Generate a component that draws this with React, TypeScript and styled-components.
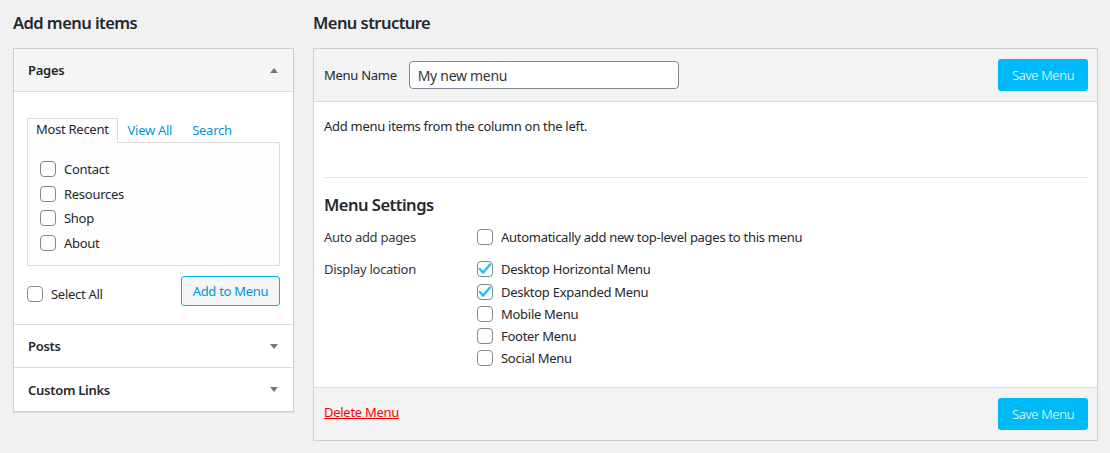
import React from 'react';
import styled, { createGlobalStyle } from 'styled-components';

const GlobalStyle = createGlobalStyle`
  html, body {
    margin: 0;
    padding: 0;
    background: #f1f1f1;
  }
  body {
    font-family: "Noto Sans", "Open Sans", sans-serif;
    font-size: 13px;
    letter-spacing: -0.28px;
    color: #23282d;
  }
  * { box-sizing: border-box; }
`;

const pages = ['Contact', 'Resources', 'Shop', 'About'];
const locations = [
  { label: 'Desktop Horizontal Menu', checked: true },
  { label: 'Desktop Expanded Menu', checked: true },
  { label: 'Mobile Menu', checked: false },
  { label: 'Footer Menu', checked: false },
  { label: 'Social Menu', checked: false },
];

const CheckBox: React.FC<{ checked?: boolean }> = ({ checked }) => (
  <Box>
    {checked && (
      <svg width="18" height="18" viewBox="0 0 18 18">
        <path d="M3.8 9 L7.2 12.6 L14 4.4" fill="none" stroke="#1ec0f5" strokeWidth="2.4" strokeLinecap="round" strokeLinejoin="round" />
      </svg>
    )}
  </Box>
);

const App: React.FC = () => {
  return (
    <>
      <GlobalStyle />
      <Page>
        <LeftColumn>
          <ColumnTitle>Add menu items</ColumnTitle>
          <Accordion>
            <SectionHead $open>
              <span>Pages</span>
              <Arrow $up />
            </SectionHead>
            <PagesBody>
              <Tabs>
                <Tab $active>Most Recent</Tab>
                <Tab>View All</Tab>
                <Tab>Search</Tab>
              </Tabs>
              <TabPanel>
                {pages.map((p) => (
                  <CheckRow key={p}>
                    <CheckBox />
                    <span>{p}</span>
                  </CheckRow>
                ))}
              </TabPanel>
              <ActionRow>
                <CheckRow>
                  <CheckBox />
                  <span>Select All</span>
                </CheckRow>
                <OutlineButton>Add to Menu</OutlineButton>
              </ActionRow>
            </PagesBody>
            <SectionHead>
              <span>Posts</span>
              <Arrow />
            </SectionHead>
            <SectionHead>
              <span>Custom Links</span>
              <Arrow />
            </SectionHead>
          </Accordion>
        </LeftColumn>

        <RightColumn>
          <ColumnTitle>Menu structure</ColumnTitle>
          <MenuPanel>
            <PanelBar>
              <NameField>
                <span>Menu Name</span>
                <NameInput defaultValue="My new menu" />
              </NameField>
              <PrimaryButton>Save Menu</PrimaryButton>
            </PanelBar>
            <PanelBody>
              <Hint>Add menu items from the column on the left.</Hint>
              <Divider />
              <SettingsTitle>Menu Settings</SettingsTitle>
              <SettingsGrid>
                <SettingLabel>Auto add pages</SettingLabel>
                <OptionList>
                  <OptionRow>
                    <CheckBox />
                    <span>Automatically add new top-level pages to this menu</span>
                  </OptionRow>
                </OptionList>
                <SettingLabel>Display location</SettingLabel>
                <OptionList>
                  {locations.map((l) => (
                    <OptionRow key={l.label}>
                      <CheckBox checked={l.checked} />
                      <span>{l.label}</span>
                    </OptionRow>
                  ))}
                </OptionList>
              </SettingsGrid>
            </PanelBody>
            <PanelFooter>
              <DeleteLink href="#">Delete Menu</DeleteLink>
              <PrimaryButton>Save Menu</PrimaryButton>
            </PanelFooter>
          </MenuPanel>
        </RightColumn>
      </Page>
    </>
  );
};

const Page = styled.div`
  display: flex;
  gap: 19px;
  padding: 0 12px 0 13px;
  align-items: flex-start;
`;

const LeftColumn = styled.div`
  width: 281px;
  flex-shrink: 0;
`;

const RightColumn = styled.div`
  flex: 1;
`;

const ColumnTitle = styled.h2`
  margin: 0;
  height: 48px;
  padding-top: 11px;
  font-size: 16.5px;
  line-height: 24px;
  font-weight: 600;
  letter-spacing: -0.55px;
  color: #23282d;
`;

const Accordion = styled.div`
  background: #fff;
  border: 1px solid #ccd0d4;
  box-shadow: 0 1px 1px rgba(0, 0, 0, 0.08);
`;

const SectionHead = styled.div<{ $open?: boolean }>`
  height: 43px;
  display: flex;
  align-items: center;
  justify-content: space-between;
  padding: 0 15px 0 14px;
  font-weight: 600;
  font-size: 13px;
  background: ${(p) => (p.$open ? '#f5f5f5' : '#fff')};
  border-bottom: 1px solid #dcdcde;
  &:last-child {
    border-bottom: none;
  }
`;

const Arrow = styled.i<{ $up?: boolean }>`
  width: 0;
  height: 0;
  border-left: 4px solid transparent;
  border-right: 4px solid transparent;
  ${(p) => (p.$up ? 'border-bottom: 5px solid #72777c;' : 'border-top: 5px solid #72777c;')}
`;

const PagesBody = styled.div`
  padding: 26px 13px 18px 13px;
  border-bottom: 1px solid #dcdcde;
`;

const Tabs = styled.div`
  display: flex;
  align-items: flex-end;
  height: 24px;
`;

const Tab = styled.div<{ $active?: boolean }>`
  height: ${(p) => (p.$active ? '25px' : '24px')};
  line-height: 21px;
  padding: 0 ${(p) => (p.$active ? '8px' : '9px')};
  color: ${(p) => (p.$active ? '#23282d' : '#0096dd')};
  background: ${(p) => (p.$active ? '#fdfdfd' : 'transparent')};
  border: 1px solid ${(p) => (p.$active ? '#dcdcde' : 'transparent')};
  border-bottom: none;
  position: relative;
  z-index: 1;
  margin-bottom: -1px;
`;

const TabPanel = styled.div`
  height: 124px;
  background: #fdfdfd;
  border: 1px solid #dcdcde;
  padding: 18px 12px;
  display: flex;
  flex-direction: column;
  gap: 8.5px;
`;

const CheckRow = styled.label`
  display: flex;
  align-items: center;
  gap: 8px;
  height: 16px;
  font-size: 13px;
`;

const Box = styled.span`
  width: 16px;
  height: 16px;
  flex-shrink: 0;
  border: 1px solid #7e8993;
  border-radius: 4px;
  background: #fff;
  position: relative;
  svg {
    position: absolute;
    left: -2px;
    top: -2px;
  }
`;

const ActionRow = styled.div`
  display: flex;
  align-items: center;
  justify-content: space-between;
  margin-top: 10px;
  ${CheckRow} {
    margin-top: 6px;
  }
`;

const OutlineButton = styled.button`
  height: 30px;
  width: 99px;
  padding: 0;
  font-family: inherit;
  font-size: 13px;
  letter-spacing: -0.28px;
  color: #0096d6;
  background: #f3f5f6;
  border: 1px solid #00b9eb;
  border-radius: 3px;
`;

const MenuPanel = styled.div`
  border: 1px solid #ccd0d4;
  background: #fff;
  box-shadow: 0 1px 1px rgba(0, 0, 0, 0.04);
`;

const PanelBar = styled.div`
  height: 53px;
  background: #f3f3f3;
  border-bottom: 1px solid #dcdcde;
  display: flex;
  align-items: center;
  justify-content: space-between;
  padding: 0 9px 0 10px;
`;

const NameField = styled.label`
  display: flex;
  align-items: center;
  gap: 12px;
`;

const NameInput = styled.input`
  width: 270px;
  height: 28px;
  border: 1px solid #7e8993;
  border-radius: 4px;
  padding: 0 8px;
  font-family: inherit;
  font-size: 14px;
  letter-spacing: -0.3px;
  color: #32373c;
  background: #fff;
`;

const PrimaryButton = styled.button`
  width: 90px;
  height: 32px;
  padding: 0;
  border: none;
  border-radius: 3px;
  background: #00baf7;
  color: #fff;
  font-family: inherit;
  font-size: 13px;
  letter-spacing: -0.28px;
  font-weight: 300;
`;

const PanelBody = styled.div`
  padding: 15px 10px 20px 10px;
`;

const Hint = styled.p`
  margin: 0;
  line-height: 19px;
`;

const Divider = styled.hr`
  border: none;
  border-top: 1px solid #e2e4e7;
  margin: 41px 0 0 0;
`;

const SettingsTitle = styled.h3`
  margin: 15px 0 9px 0;
  font-size: 16.5px;
  line-height: 24px;
  font-weight: 600;
  letter-spacing: -0.5px;
`;

const SettingsGrid = styled.div`
  display: grid;
  grid-template-columns: 153px 1fr;
  row-gap: 10px;
`;

const SettingLabel = styled.div`
  color: #32373c;
  line-height: 22px;
`;

const OptionList = styled.div`
  display: flex;
  flex-direction: column;
  gap: 5.8px;
  padding-top: 3px;
`;

const OptionRow = styled.label`
  display: flex;
  align-items: center;
  gap: 8px;
  height: 16.5px;
`;

const PanelFooter = styled.div`
  height: 53px;
  background: #f3f3f3;
  border-top: 1px solid #dcdcde;
  display: flex;
  align-items: center;
  justify-content: space-between;
  padding: 0 9px 0 10px;
`;

const DeleteLink = styled.a`
  color: #ff0000;
  text-decoration: underline;
  font-size: 13px;
  margin-bottom: 3px;
`;

export default App;
